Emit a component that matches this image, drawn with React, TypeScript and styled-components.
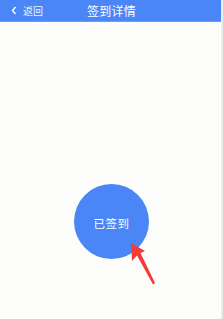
import React from "react";
import styled, { createGlobalStyle } from "styled-components";

const GlobalStyle = createGlobalStyle`
  html, body {
    margin: 0;
    padding: 0;
    background: #fdfdfb;
  }
  body {
    font-family: "Noto Sans CJK SC", "Liberation Sans", sans-serif;
  }
`;

const Page = styled.div`
  width: 223px;
  height: 319px;
  display: flex;
  flex-direction: column;
  background: #fdfdfb;
  border-right: 2px solid #ececec;
  box-sizing: border-box;
  overflow: hidden;
`;

const NavBar = styled.div`
  height: 22px;
  flex-shrink: 0;
  background: #4a86f6;
  display: grid;
  grid-template-columns: 1fr auto 1fr;
  align-items: center;
  color: #fff;
  border-bottom: 1px solid #6b9cf6;
  box-sizing: border-box;
`;

const BackButton = styled.div`
  display: flex;
  align-items: center;
  gap: 6px;
  padding-left: 11px;
  font-size: 10px;
  line-height: 1;
  color: #eef3ff;
`;

const Title = styled.div`
  font-size: 12px;
  line-height: 1;
  letter-spacing: 0.3px;
  padding-left: 2px;
`;

const Body = styled.div`
  flex: 1;
  display: flex;
  justify-content: center;
  padding-top: 162px;
  padding-left: 2px;
`;

const SignWrap = styled.div`
  position: relative;
  width: 75px;
  height: 75px;
`;

const SignCircle = styled.div`
  width: 75px;
  height: 75px;
  border-radius: 50%;
  background: #4a86f6;
  color: #fff;
  display: flex;
  align-items: center;
  justify-content: center;
  font-size: 11.5px;
  padding-top: 3px;
  box-sizing: border-box;
  letter-spacing: 0.5px;
`;

const Pointer = styled.svg`
  position: absolute;
  left: 54px;
  top: 56px;
`;

export default function App() {
  return (
    <>
      <GlobalStyle />
      <Page>
        <NavBar>
          <BackButton>
            <svg width="6" height="9" viewBox="0 0 6 9">
              <path d="M4.5 1 L1.5 4.5 L4.5 8" fill="none" stroke="#fff" strokeWidth="1.4" />
            </svg>
            返回
          </BackButton>
          <Title>签到详情</Title>
          <div />
        </NavBar>
        <Body>
          <SignWrap>
            <SignCircle>已签到</SignCircle>
            <Pointer width="30" height="46" viewBox="0 0 30 46">
              <path d="M3 3 L17 11 L12.5 13 L27 43 L25 44.5 L9 15.5 L4 21 Z" fill="#f53a3a" />
            </Pointer>
          </SignWrap>
        </Body>
      </Page>
    </>
  );
}
